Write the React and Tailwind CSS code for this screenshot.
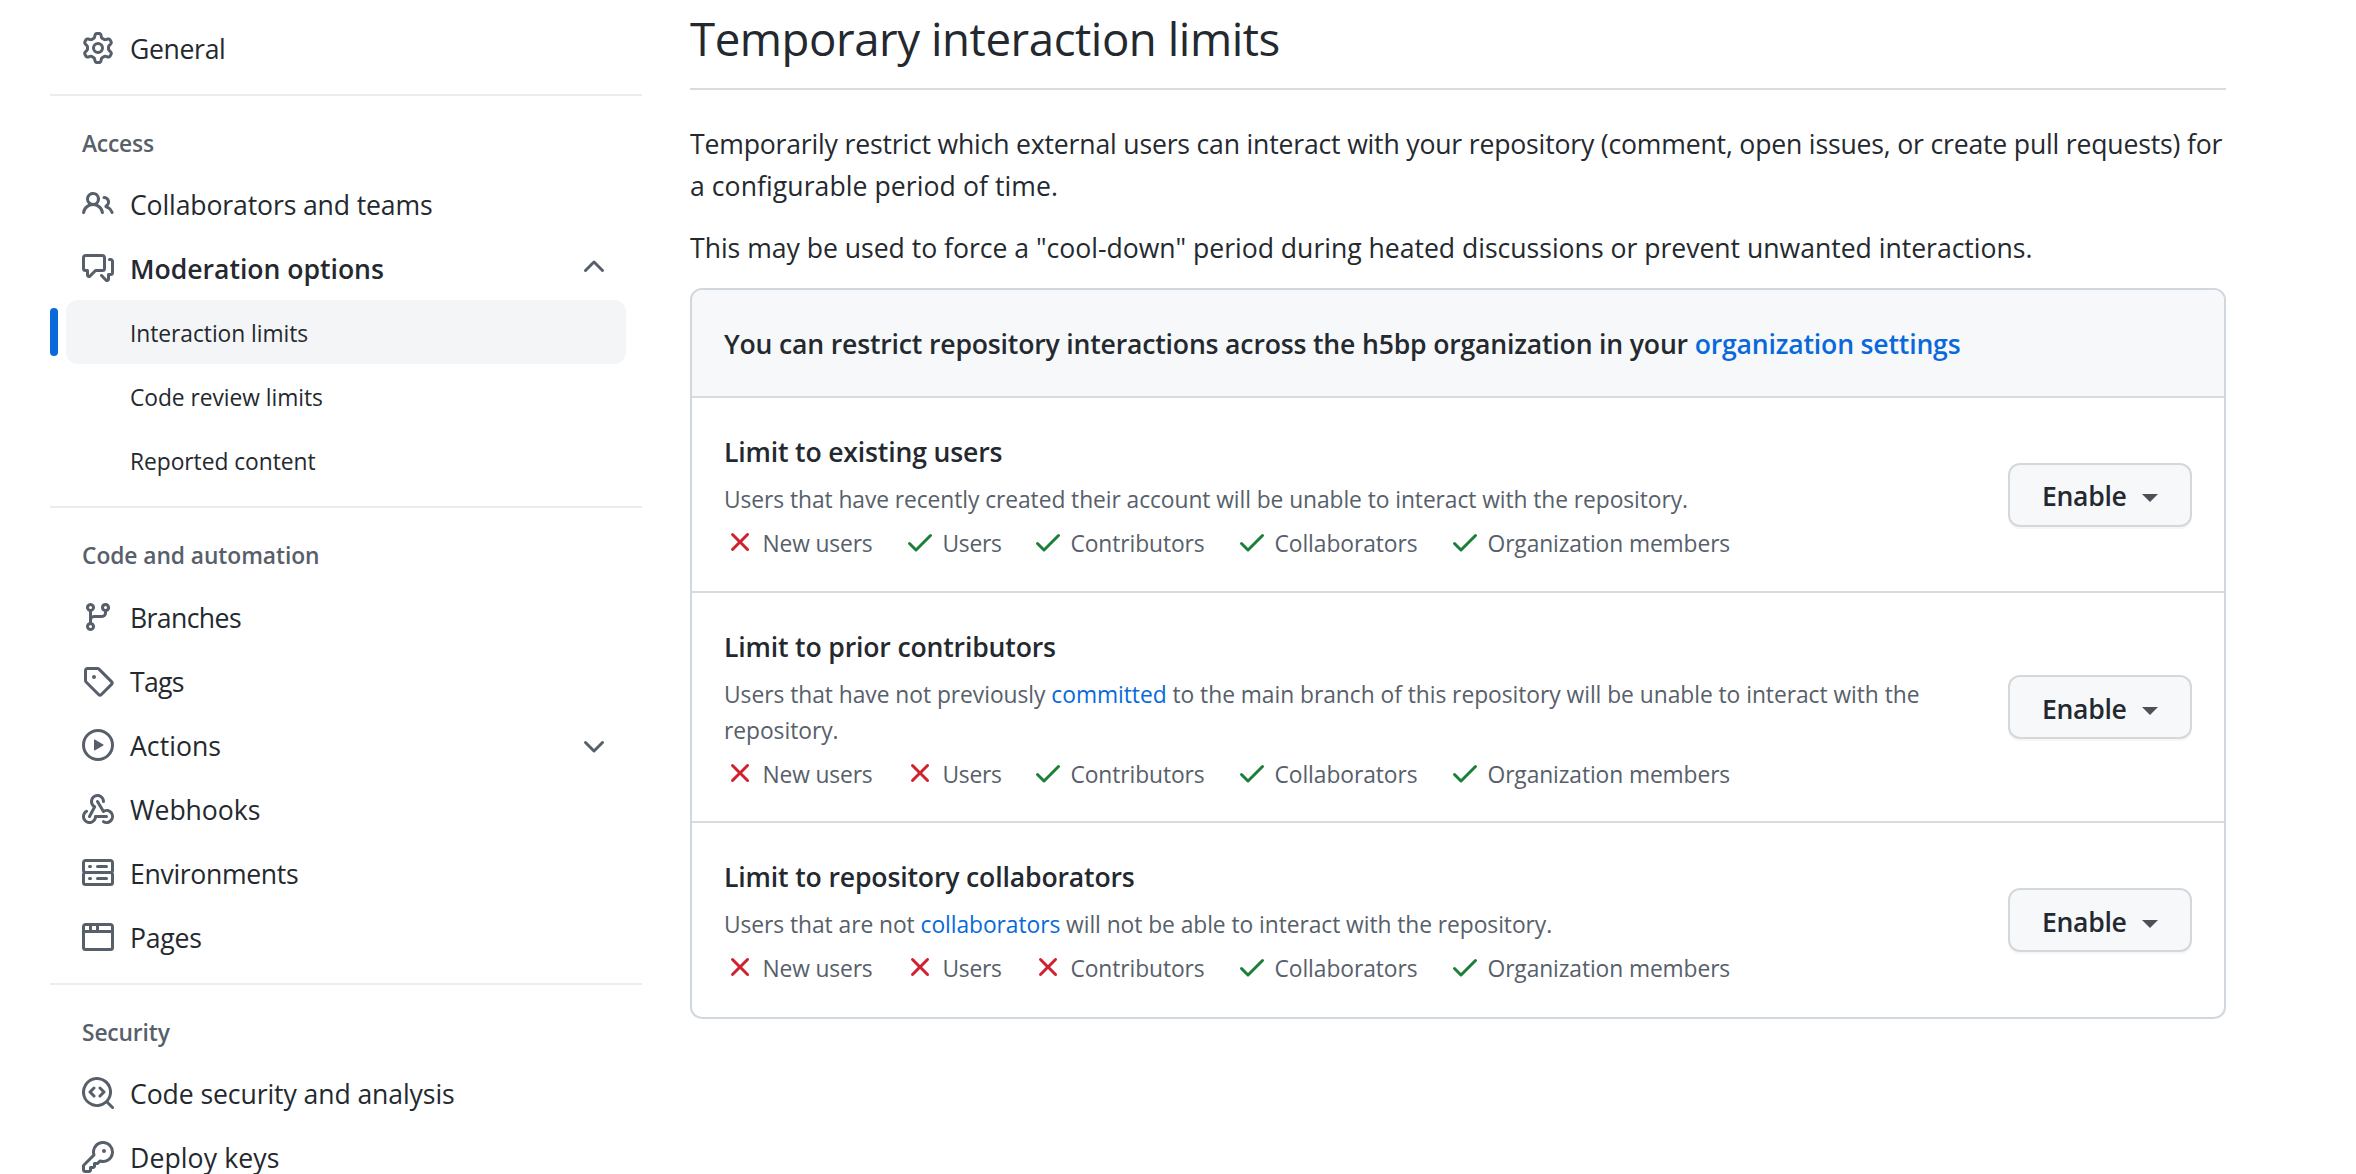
import React from "react";

const PATHS = {
  gear: "M8 0a8.2 8.2 0 0 1 .701.031C9.444.095 9.99.645 10.16 1.29l.288 1.107c.018.066.079.158.212.224.231.114.454.243.668.386.123.082.233.09.299.071l1.103-.303c.644-.176 1.392.021 1.82.63.27.385.506.792.704 1.218.315.675.111 1.422-.364 1.891l-.814.806c-.049.048-.098.147-.088.294.016.257.016.515 0 .772-.01.147.038.246.088.294l.814.806c.475.469.679 1.216.364 1.891a7.977 7.977 0 0 1-.704 1.217c-.428.61-1.176.807-1.82.63l-1.102-.302c-.067-.019-.177-.011-.3.071a5.909 5.909 0 0 1-.668.386c-.133.066-.194.158-.211.224l-.29 1.106c-.168.646-.715 1.196-1.458 1.26a8.006 8.006 0 0 1-1.402 0c-.743-.064-1.289-.614-1.458-1.26l-.289-1.106c-.018-.066-.079-.158-.212-.224a5.738 5.738 0 0 1-.668-.386c-.123-.082-.233-.09-.299-.071l-1.103.303c-.644.176-1.392-.021-1.82-.63a8.12 8.12 0 0 1-.704-1.218c-.315-.675-.111-1.422.363-1.891l.815-.806c.05-.048.098-.147.088-.294a6.214 6.214 0 0 1 0-.772c.01-.147-.038-.246-.088-.294l-.815-.806C.635 6.045.431 5.298.746 4.623a7.92 7.92 0 0 1 .704-1.217c.428-.61 1.176-.807 1.82-.63l1.102.302c.067.019.177.011.3-.071.214-.143.437-.272.668-.386.133-.066.194-.158.211-.224l.29-1.106C6.009.645 6.556.095 7.299.03 7.53.01 7.764 0 8 0Zm-.571 1.525c-.036.003-.108.036-.137.146l-.289 1.105c-.147.561-.549.967-.998 1.189-.173.086-.34.183-.5.29-.417.278-.97.423-1.529.27l-1.103-.303c-.109-.03-.175.016-.195.045-.22.312-.412.644-.573.99-.014.031-.021.11.059.19l.815.806c.411.406.562.957.53 1.456a4.709 4.709 0 0 0 0 .582c.032.499-.119 1.05-.53 1.456l-.815.806c-.081.08-.073.159-.059.19.162.346.353.677.573.989.02.03.085.076.195.046l1.102-.303c.56-.153 1.113-.008 1.53.27.161.107.328.204.501.29.447.222.85.629.997 1.189l.289 1.105c.029.109.101.143.137.146a6.6 6.6 0 0 0 1.142 0c.036-.003.108-.036.137-.146l.289-1.105c.147-.561.549-.967.998-1.189.173-.086.34-.183.5-.29.417-.278.97-.423 1.529-.27l1.103.303c.109.029.175-.016.195-.045.22-.313.411-.644.573-.99.014-.031.021-.11-.059-.19l-.815-.806c-.411-.406-.562-.957-.53-1.456a4.709 4.709 0 0 0 0-.582c-.032-.499.119-1.05.53-1.456l.815-.806c.081-.08.073-.159.059-.19a6.464 6.464 0 0 0-.573-.989c-.02-.03-.085-.076-.195-.046l-1.102.303c-.56.153-1.113.008-1.53-.27a4.44 4.44 0 0 0-.501-.29c-.447-.222-.85-.629-.997-1.189l-.289-1.105c-.029-.11-.101-.143-.137-.146a6.6 6.6 0 0 0-1.142 0ZM11 8a3 3 0 1 1-6 0 3 3 0 0 1 6 0ZM9.5 8a1.5 1.5 0 1 0-3.001.001A1.5 1.5 0 0 0 9.5 8Z",
  people: "M2 5.5a3.5 3.5 0 1 1 5.898 2.549 5.508 5.508 0 0 1 3.034 4.084.75.75 0 1 1-1.482.235 4 4 0 0 0-7.9 0 .75.75 0 0 1-1.482-.236A5.507 5.507 0 0 1 3.102 8.05 3.493 3.493 0 0 1 2 5.5ZM11 4a3.001 3.001 0 0 1 2.22 5.018 5.01 5.01 0 0 1 2.56 3.012.749.749 0 0 1-.885.954.752.752 0 0 1-.549-.514 3.507 3.507 0 0 0-2.522-2.372.75.75 0 0 1-.574-.73v-.352a.75.75 0 0 1 .416-.672A1.5 1.5 0 0 0 11 5.5.75.75 0 0 1 11 4Zm-5.5-.5a2 2 0 1 0-.001 3.999A2 2 0 0 0 5.5 3.5Z",
  discussion: "M1.75 1h8.5c.966 0 1.75.784 1.75 1.75v5.5A1.75 1.75 0 0 1 10.25 10H7.061l-2.574 2.573A1.458 1.458 0 0 1 2 11.543V10h-.25A1.75 1.75 0 0 1 0 8.25v-5.5C0 1.784.784 1 1.75 1ZM1.5 2.75v5.5c0 .138.112.25.25.25h1a.75.75 0 0 1 .75.75v2.19l2.72-2.72a.749.749 0 0 1 .53-.22h3.5a.25.25 0 0 0 .25-.25v-5.5a.25.25 0 0 0-.25-.25h-8.5a.25.25 0 0 0-.25.25Zm13 2a.25.25 0 0 0-.25-.25h-.5a.75.75 0 0 1 0-1.5h.5c.966 0 1.75.784 1.75 1.75v5.5A1.75 1.75 0 0 1 14.25 12H14v1.543a1.458 1.458 0 0 1-2.487 1.03L9.22 12.28a.749.749 0 0 1 .326-1.275.749.749 0 0 1 .734.215l2.22 2.22v-2.19a.75.75 0 0 1 .75-.75h1a.25.25 0 0 0 .25-.25Z",
  branch: "M9.5 3.25a2.25 2.25 0 1 1 3 2.122V6A2.5 2.5 0 0 1 10 8.5H6a1 1 0 0 0-1 1v1.128a2.251 2.251 0 1 1-1.5 0V5.372a2.25 2.25 0 1 1 1.5 0v1.836A2.493 2.493 0 0 1 6 7h4a1 1 0 0 0 1-1v-.628A2.25 2.25 0 0 1 9.5 3.25Zm-6 0a.75.75 0 1 0 1.5 0 .75.75 0 0 0-1.5 0Zm8.25-.75a.75.75 0 1 0 0 1.5.75.75 0 0 0 0-1.5ZM4.25 12a.75.75 0 1 0 0 1.5.75.75 0 0 0 0-1.5Z",
  tag: "M1 7.775V2.75C1 1.784 1.784 1 2.75 1h5.025c.464 0 .91.184 1.238.513l6.25 6.25a1.75 1.75 0 0 1 0 2.474l-5.026 5.026a1.75 1.75 0 0 1-2.474 0l-6.25-6.25A1.752 1.752 0 0 1 1 7.775Zm1.5 0c0 .066.026.13.073.177l6.25 6.25a.25.25 0 0 0 .354 0l5.025-5.025a.25.25 0 0 0 0-.354l-6.25-6.25a.25.25 0 0 0-.177-.073H2.75a.25.25 0 0 0-.25.25ZM6 5a1 1 0 1 1 0 2 1 1 0 0 1 0-2Z",
  play: "M8 0a8 8 0 1 1 0 16A8 8 0 0 1 8 0ZM1.5 8a6.5 6.5 0 1 0 13 0 6.5 6.5 0 0 0-13 0Zm4.879-2.773 4.264 2.559a.25.25 0 0 1 0 .428l-4.264 2.559A.25.25 0 0 1 6 10.559V5.442a.25.25 0 0 1 .379-.215Z",
  webhook: "M5.5 4.25a2.25 2.25 0 0 1 4.5 0 .75.75 0 0 0 1.5 0 3.75 3.75 0 1 0-6.14 2.889l-2.272 4.258a.75.75 0 0 0 1.324.706L7 7.25a.75.75 0 0 0-.309-1.015A2.25 2.25 0 0 1 5.5 4.25ZM7.364 3.607a.75.75 0 0 1 1.03.257l2.608 4.349a3.75 3.75 0 1 1-.628 6.785.75.75 0 0 1 .752-1.299 2.25 2.25 0 1 0-.033-3.88.75.75 0 0 1-1.03-.256L7.107 4.636a.75.75 0 0 1 .257-1.03ZM2.9 8.776A.75.75 0 0 1 2.625 9.8 2.25 2.25 0 1 0 6 11.75a.75.75 0 0 1 .75-.751h5.5a.75.75 0 0 1 0 1.5H7.425a3.751 3.751 0 1 1-5.55-3.998.75.75 0 0 1 1.024.274Z",
  server: "M1.75 1h12.5c.966 0 1.75.784 1.75 1.75v4c0 .372-.116.717-.314 1 .198.283.314.628.314 1v4a1.75 1.75 0 0 1-1.75 1.75H1.75A1.75 1.75 0 0 1 0 12.75v-4c0-.358.109-.707.314-1a1.739 1.739 0 0 1-.314-1v-4C0 1.784.784 1 1.75 1ZM1.5 2.75v4c0 .138.112.25.25.25h12.5a.25.25 0 0 0 .25-.25v-4a.25.25 0 0 0-.25-.25H1.75a.25.25 0 0 0-.25.25Zm.25 5.75a.25.25 0 0 0-.25.25v4c0 .138.112.25.25.25h12.5a.25.25 0 0 0 .25-.25v-4a.25.25 0 0 0-.25-.25ZM7 4.75A.75.75 0 0 1 7.75 4h4.5a.75.75 0 0 1 0 1.5h-4.5A.75.75 0 0 1 7 4.75ZM7.75 10h4.5a.75.75 0 0 1 0 1.5h-4.5a.75.75 0 0 1 0-1.5ZM3 4.75A.75.75 0 0 1 3.75 4h.5a.75.75 0 0 1 0 1.5h-.5A.75.75 0 0 1 3 4.75ZM3.75 10h.5a.75.75 0 0 1 0 1.5h-.5a.75.75 0 0 1 0-1.5Z",
  browser: "M0 2.75C0 1.784.784 1 1.75 1h12.5c.966 0 1.75.784 1.75 1.75v10.5A1.75 1.75 0 0 1 14.25 15H1.75A1.75 1.75 0 0 1 0 13.25ZM14.5 6h-13v7.25c0 .138.112.25.25.25h12.5a.25.25 0 0 0 .25-.25Zm-6-3.5v2h6V2.75a.25.25 0 0 0-.25-.25ZM5 2.5v2h2v-2Zm-3.25 0a.25.25 0 0 0-.25.25V4.5h2v-2Z",
  codescan: "M8.47 4.97a.75.75 0 0 0 0 1.06L9.94 7.5 8.47 8.97a.75.75 0 1 0 1.06 1.06l2-2a.75.75 0 0 0 0-1.06l-2-2a.75.75 0 0 0-1.06 0ZM6.53 6.03a.75.75 0 0 0-1.06-1.06l-2 2a.75.75 0 0 0 0 1.06l2 2a.75.75 0 1 0 1.06-1.06L5.06 7.5l1.47-1.47ZM12.246 13.307a7.501 7.501 0 1 1 1.06-1.06l2.474 2.473a.749.749 0 0 1-.326 1.275.749.749 0 0 1-.734-.215ZM1.5 7.5a6.002 6.002 0 0 0 3.608 5.504 6.002 6.002 0 0 0 6.486-1.117.748.748 0 0 1 .292-.293A6 6 0 1 0 1.5 7.5Z",
  key: "M10.5 0a5.499 5.499 0 1 1-1.288 10.848l-.932.932a.749.749 0 0 1-.53.22H7v.75a.749.749 0 0 1-.22.53l-.5.5a.749.749 0 0 1-.53.22H5v.75a.749.749 0 0 1-.22.53l-.5.5a.749.749 0 0 1-.53.22h-2A1.75 1.75 0 0 1 0 14.25v-2c0-.199.079-.389.22-.53l4.932-4.932A5.5 5.5 0 0 1 10.5 0Zm-4 5.5c-.001.431.069.86.205 1.269a.75.75 0 0 1-.181.768L1.5 12.56v1.69c0 .138.112.25.25.25h1.69l.06-.06v-1.19a.75.75 0 0 1 .75-.75h1.19l.06-.06v-1.19a.75.75 0 0 1 .75-.75h1.19l1.023-1.025a.75.75 0 0 1 .768-.18A4 4 0 1 0 6.5 5.5ZM11 6a1 1 0 1 1 0-2 1 1 0 0 1 0 2Z",
  chevron: "M12.78 6.22a.75.75 0 0 1 0 1.06l-4.25 4.25a.75.75 0 0 1-1.06 0L3.22 7.28a.75.75 0 0 1 1.06-1.06L8 9.94l3.72-3.72a.75.75 0 0 1 1.06 0Z",
  check: "M13.78 4.22a.75.75 0 0 1 0 1.06l-7.25 7.25a.75.75 0 0 1-1.06 0L2.22 9.28a.751.751 0 0 1 .018-1.042.751.751 0 0 1 1.042-.018L6 10.94l6.72-6.72a.75.75 0 0 1 1.06 0Z",
  x: "M3.72 3.72a.75.75 0 0 1 1.06 0L8 6.94l3.22-3.22a.749.749 0 0 1 1.275.326.749.749 0 0 1-.215.734L9.06 8l3.22 3.22a.749.749 0 0 1-.326 1.275.749.749 0 0 1-.734-.215L8 9.06l-3.22 3.22a.751.751 0 0 1-1.042-.018.751.751 0 0 1-.018-1.042L6.94 8 3.72 4.78a.75.75 0 0 1 0-1.06Z",
};

function Icon({ name, className = "" }) {
  return (
    <svg viewBox="0 0 16 16" className={`size-8 shrink-0 fill-current ${className}`} aria-hidden="true">
      <path d={PATHS[name]} />
    </svg>
  );
}

function NavItem({ icon, label, chevron, bold, track = "tracking-[-0.13px]" }) {
  return (
    <li className="mx-4 flex h-16 items-center gap-4 px-4">
      <Icon name={icon} className="text-[#57606a]" />
      <span className={`flex-1 pt-[2px] text-[26.6px] leading-10 ${track} ${bold ? "font-semibold" : ""}`}>{label}</span>
      {chevron && <Icon name="chevron" className={`text-[#57606a] ${chevron === "up" ? "rotate-180" : ""}`} />}
    </li>
  );
}

function SubItem({ label, active }) {
  return (
    <li className="flex h-16 items-center">
      <span className={`h-12 w-2 rounded-[6px] ${active ? "bg-[#0969da]" : ""}`} />
      <span className={`mr-4 ml-2 flex h-16 flex-1 items-center rounded-xl pt-1 pl-16 text-[22.8px] tracking-[-0.05px] ${active ? "bg-[#f4f5f7]" : ""}`}>
        {label}
      </span>
    </li>
  );
}

function Section({ title, className = "", children }) {
  return (
    <section className="mt-[14px] border-t-2 border-[#eaecef]">
      <h3 className={`pl-8 text-[22.8px] leading-[36px] font-semibold text-[#57606a] ${className}`}>{title}</h3>
      <ul>{children}</ul>
    </section>
  );
}

const GROUPS = [
  ["New users", "tracking-[-0.15px]"],
  ["Users", "tracking-[-0.3px]"],
  ["Contributors", "tracking-[-0.1px]"],
  ["Collaborators", "tracking-[-0.07px]"],
  ["Organization members", "tracking-[-0.1px]"],
];

function LimitRow({ title, track, textTrack, blocked, className, children }) {
  return (
    <div className={`flex items-center border-t-2 border-[#d8dbe0] px-8 ${className}`}>
      <div className="flex-1 self-start pt-[33px]">
        <h4 className={`text-[26.6px] leading-[42px] font-semibold ${track}`}>{title}</h4>
        <p className={`mt-[9px] w-[1230px] text-[22.8px] leading-[36px] text-[#57606a] ${textTrack}`}>{children}</p>
        <ul className="mt-2 grid grid-cols-[180px_128px_204px_213px_auto] text-[22.8px] leading-[36px] text-[#57606a]">
          {GROUPS.map(([label, t], i) => (
            <li key={label} className="flex gap-[6.5px] whitespace-nowrap">
              <Icon name={i < blocked ? "x" : "check"} className={i < blocked ? "text-[#cf222e]" : "text-[#1a7f37]"} />
              <span className={t}>{label}</span>
            </li>
          ))}
        </ul>
      </div>
      <button className="flex h-16 w-[184px] items-center rounded-xl border-2 border-[#d5d8da] bg-[#f6f8fa] pl-8 shadow-[0_2px_0_rgba(31,35,40,0.04)]">
        <span className="pt-[3px] text-[26.6px] leading-10 font-semibold tracking-[-0.32px]">Enable</span>
        <span className="mt-[7px] ml-[15px] border-x-8 border-t-8 border-x-transparent border-t-[#4b5157]" />
      </button>
    </div>
  );
}

function Link({ children }) {
  return <a className="text-[#0969da]">{children}</a>;
}

export default function App() {
  return (
    <div className="flex h-[1174px] gap-12 overflow-hidden bg-white pl-[50px] font-['Open_Sans',sans-serif] text-[#24292f]">
      <nav className="w-[592px] shrink-0 pt-4">
        <ul>
          <NavItem icon="gear" label="General" track="tracking-[-0.35px]" />
        </ul>
        <Section title="Access" className="h-[76px] pt-[30px] tracking-[-0.2px]">
          <NavItem icon="people" label="Collaborators and teams" />
          <NavItem icon="discussion" label="Moderation options" chevron="up" bold track="tracking-[-0.02px]" />
          <SubItem label="Interaction limits" active />
          <SubItem label="Code review limits" />
          <SubItem label="Reported content" />
        </Section>
        <Section title="Code and automation" className="h-[77px] pt-[30px] tracking-[-0.07px]">
          <NavItem icon="branch" label="Branches" track="tracking-[-0.6px]" />
          <NavItem icon="tag" label="Tags" track="tracking-[-0.7px]" />
          <NavItem icon="play" label="Actions" chevron="down" track="tracking-[0.05px]" />
          <NavItem icon="webhook" label="Webhooks" track="tracking-[-0.05px]" />
          <NavItem icon="server" label="Environments" track="tracking-[-0.327px]" />
          <NavItem icon="browser" label="Pages" track="tracking-[-0.25px]" />
        </Section>
        <Section title="Security" className="h-[76px] pt-[30px] tracking-[-0.15px]">
          <NavItem icon="codescan" label="Code security and analysis" track="tracking-[-0.094px]" />
          <NavItem icon="key" label="Deploy keys" track="tracking-[0.1px]" />
        </Section>
      </nav>

      <main className="w-[1536px] shrink-0">
        <h1 className="h-[90px] border-b-2 border-[#d8dbdf] text-[45.6px] leading-[76px] tracking-[-0.45px]">
          Temporary interaction limits
        </h1>
        <p className="mt-[33px] text-[26.6px] leading-[42px] tracking-[-0.18px]">
          Temporarily restrict which external users can interact with your repository (comment, open issues, or create pull requests) for
          <br />
          <span className="tracking-[0.06px]">a configurable period of time.</span>
        </p>
        <p className="mt-5 text-[26.6px] leading-[42px] tracking-[-0.02px]">
          This may be used to force a "cool-down" period during heated discussions or prevent unwanted interactions.
        </p>
        <div className="mt-[19px] overflow-hidden rounded-xl border-2 border-[#d0d7de]">
          <h2 className="h-[106px] bg-[#f6f8fa] px-8 text-[26.6px] leading-[108px] font-semibold tracking-[-0.18px]">
            You can restrict repository interactions across the h5bp organization in your <Link>organization settings</Link>
          </h2>
          <LimitRow title="Limit to existing users" track="tracking-[-0.17px]" textTrack="tracking-[-0.073px]" blocked={1} className="h-[195px]">
            Users that have recently created their account will be unable to interact with the repository.
          </LimitRow>
          <LimitRow title="Limit to prior contributors" track="tracking-[-0.16px]" textTrack="tracking-[-0.04px]" blocked={2} className="h-[230px]">
            Users that have not previously <Link>committed</Link> to the main branch of this repository will be unable to interact with the
            repository.
          </LimitRow>
          <LimitRow title="Limit to repository collaborators" track="tracking-[-0.15px]" textTrack="tracking-[-0.06px]" blocked={3} className="h-[196px]">
            Users that are not <Link>collaborators</Link> will not be able to interact with the repository.
          </LimitRow>
        </div>
      </main>
    </div>
  );
}
